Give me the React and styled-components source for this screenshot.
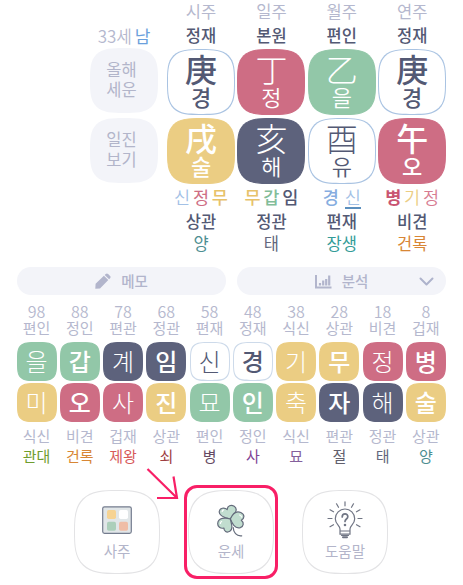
import styled, { createGlobalStyle } from "styled-components";

const GlobalStyle = createGlobalStyle`
  * { box-sizing: border-box; }
  body {
    margin: 0;
    background: #fff;
    overflow: hidden;
    font-family: "Noto Sans CJK KR", "Noto Sans", sans-serif;
  }
`;

const palette = {
  red: "#ce6d84",
  green: "#92c7a8",
  yellow: "#ebcd83",
  navy: "#5d627c",
  white: "#fff",
};

const muted = "#b5b8ce";
const ink = "#535974";

const Page = styled.main`
  position: relative;
  width: 463px;
  height: 585px;
  overflow: hidden;
`;

const Chart = styled.section`
  display: flex;
  gap: 9px;
  height: 267px;
  padding-left: 90px;
`;

const Side = styled.div`
  display: flex;
  flex-direction: column;
  gap: 5px;
  width: 68px;
  padding-top: 23px;
`;

const Age = styled.div`
  height: 20px;
  line-height: 25px;
  font-size: 17px;
  font-weight: 350;
  text-align: center;
  white-space: nowrap;
  color: ${muted};
  span {
    margin-left: -1px;
    color: #6ba0dc;
    font-weight: 400;
  }
`;

const SideButton = styled.button`
  height: 65px;
  padding: 0 5px 4px 0;
  border: 0;
  border-radius: 27px;
  background: #f3f4f9;
  color: #b2b5ca;
  font: 400 16.5px/20px "Noto Sans CJK KR", sans-serif;
  @supports (corner-shape: squircle) {
    border-radius: 50%;
    corner-shape: superellipse(1.7);
  }
`;

const Pillars = styled.div`
  display: grid;
  grid-template-columns: repeat(4, 68px);
  column-gap: 2.4px;
`;

const Pillar = styled.div`
  display: flex;
  flex-direction: column;
  align-items: center;
`;

const Label = styled.div`
  height: ${(p) => p.$h || 24}px;
  margin-bottom: ${(p) => p.$gap || 0}px;
  line-height: ${(p) => p.$h || 24}px;
  font-size: ${(p) => p.$size || 16.5}px;
  font-weight: ${(p) => p.$weight || 400};
  white-space: nowrap;
  color: ${(p) => p.$color || muted};
`;

const Tile = styled.div`
  display: flex;
  flex-direction: column;
  align-items: center;
  width: 68px;
  height: 66px;
  margin-bottom: 3.5px;
  border-radius: 27px;
  border: 1px solid ${(p) => (p.$tone === "white" ? "#a9c3e2" : palette[p.$tone])};
  background: ${(p) => palette[p.$tone]};
  color: ${(p) => (p.$tone === "white" ? ink : "#fff")};
  font-weight: ${(p) => (p.$bold ? 500 : 300)};
  @supports (corner-shape: squircle) {
    border-radius: 50%;
    corner-shape: superellipse(1.7);
  }
`;

const Hanja = styled.span`
  height: 35px;
  font-size: 32px;
  line-height: 37px;
`;

const Reading = styled.span`
  font-size: 22px;
  line-height: 23px;
  font-weight: ${(p) => (p.$bold ? 500 : 350)};
`;

const Stems = styled.div`
  display: flex;
  justify-content: center;
  gap: ${(p) => (p.$wide ? 6 : 2.8)}px;
  height: 24px;
  margin-top: -3px;
  font-size: 17.5px;
  line-height: 24px;
`;

const Stem = styled.span`
  height: ${(p) => (p.$marked ? 24 : 22)}px;
  color: ${(p) => p.$color};
  font-weight: ${(p) => p.$weight};
  border-bottom: ${(p) => (p.$marked ? "2px solid #5b8fbe" : "0")};
`;

const Bars = styled.section`
  display: grid;
  grid-template-columns: 209px 209px;
  gap: 11px;
  padding-left: 17px;
`;

const Bar = styled.button`
  display: flex;
  align-items: center;
  justify-content: center;
  gap: 10px;
  height: 28px;
  padding: 0;
  border: 0;
  border-radius: 14px;
  background: #f3f4f9;
  color: #b2b5cc;
  font: 500 14.5px/28px "Noto Sans CJK KR", sans-serif;
  svg { display: block; }
`;

const BarEnd = styled.span`
  width: 14px;
  margin-left: 41px;
  margin-right: -65px;
`;

const Decades = styled.section`
  display: grid;
  grid-template-columns: repeat(10, 43.25px);
  padding: 8px 0 0 15px;
`;

const Decade = styled.div`
  display: flex;
  flex-direction: column;
  align-items: center;
`;

const SmallTile = styled.div`
  width: 40px;
  height: 39px;
  margin-bottom: 2px;
  border-radius: 13px;
  border: 1px solid ${(p) => (p.$tone === "white" ? "#cddaea" : palette[p.$tone])};
  background: ${(p) => palette[p.$tone]};
  color: ${(p) => (p.$tone === "white" ? ink : "#fff")};
  font-size: 24px;
  line-height: 36px;
  font-weight: ${(p) => (p.$bold ? 500 : 300)};
  text-align: center;
  @supports (corner-shape: squircle) {
    border-radius: 50%;
    corner-shape: superellipse(1.9);
  }
`;

const Menu = styled.nav`
  display: grid;
  grid-template-columns: repeat(3, 86px);
  gap: 28px;
  padding: 27px 0 0 74px;
`;

const MenuButton = styled.button`
  display: flex;
  flex-direction: column;
  align-items: center;
  height: 84px;
  padding: 11px 0 0;
  border: 1px solid #e3e3e5;
  border-radius: 36px;
  background: #fff;
  color: #b3b5ca;
  font: 400 14.5px/20px "Noto Sans CJK KR", sans-serif;
  svg {
    display: block;
    height: 38px;
    margin-top: -1px;
    margin-bottom: 2px;
  }
  @supports (corner-shape: squircle) {
    border-radius: 50%;
    corner-shape: superellipse(1.6);
  }
`;

const Highlight = styled.div`
  position: absolute;
  left: 184px;
  top: 485px;
  width: 94px;
  height: 94px;
  border: 3px solid #f81f66;
  border-radius: 13px;
`;

const Pointer = styled.svg`
  position: absolute;
  left: 140px;
  top: 460px;
`;

const pillars = [
  {
    name: "시주", god: "정재",
    top: ["庚", "경", "white", true], bottom: ["戌", "술", "yellow", true],
    stems: [["신", "#a3c1e6", 350], ["정", "#ce6d84", 400], ["무", "#e7c26a", 500]],
    lower: "상관", stage: "양", stageColor: "#4d8e91",
  },
  {
    name: "일주", god: "본원",
    top: ["丁", "정", "red", false], bottom: ["亥", "해", "navy", false],
    stems: [["무", "#e7c26a", 500], ["갑", "#82bd99", 500], ["임", "#535974", 500]],
    lower: "정관", stage: "태", stageColor: "#63677d",
  },
  {
    name: "월주", god: "편인",
    top: ["乙", "을", "green", false], bottom: ["酉", "유", "white", false],
    stems: [["경", "#86ade0", 500], ["신", "#a3c1e6", 350, true]],
    lower: "편재", stage: "장생", stageColor: "#339c98",
  },
  {
    name: "연주", god: "정재",
    top: ["庚", "경", "white", true], bottom: ["午", "오", "red", true],
    stems: [["병", "#c95572", 700], ["기", "#ebcd83", 350], ["정", "#d77b91", 350]],
    lower: "비견", stage: "건록", stageColor: "#d88635",
  },
];

const decades = [
  [98, "편인", "을", "green", 0, "미", "yellow", 0, "식신", "관대", "#6f9d2e"],
  [88, "정인", "갑", "green", 1, "오", "red", 1, "비견", "건록", "#d88635"],
  [78, "편관", "계", "navy", 0, "사", "red", 0, "겁재", "제왕", "#d75a5a"],
  [68, "정관", "임", "navy", 1, "진", "yellow", 1, "상관", "쇠", "#9e3e42"],
  [58, "편재", "신", "white", 0, "묘", "green", 0, "편인", "병", "#654a63"],
  [48, "정재", "경", "white", 1, "인", "green", 1, "정인", "사", "#804395"],
  [38, "식신", "기", "yellow", 0, "축", "yellow", 0, "식신", "묘", "#84609c"],
  [28, "상관", "무", "yellow", 1, "자", "navy", 1, "편관", "절", "#62606d"],
  [18, "비견", "정", "red", 0, "해", "navy", 0, "정관", "태", "#63677d"],
  [8, "겁재", "병", "red", 1, "술", "yellow", 1, "상관", "양", "#4d8e91"],
];

const PencilIcon = () => (
  <svg width="16" height="16" viewBox="0 0 16 16" fill="#b2b5cc">
    <path d="M.3 15.700.6 10.800 8.900 2.700l4.400 4.400-8.300 8.300zM9.700 1.900l1-1q1.200-1 2.400 0l2 2q1 1.200 0 2.400l-1 1z" />
  </svg>
);

const ChartIcon = () => (
  <svg width="17" height="15" viewBox="0 0 17 15" fill="none" stroke="#b2b5cc">
    <path d="M1 1v12.500h15.500" strokeWidth="2" />
    <path d="M5 9v2.500M8.200 6.500v5M11.200 5v6.500M14.200 1.500v10" strokeWidth="2.200" />
  </svg>
);

const ChevronIcon = () => (
  <svg width="15" height="10" viewBox="0 0 15 10" fill="none" stroke="#aeb3cc" strokeWidth="2">
    <path d="m1.500 2.500 6 6 6-6" strokeLinecap="round" strokeLinejoin="round" />
  </svg>
);

const BoardIcon = () => (
  <svg width="30" height="38" viewBox="0 0 30 38">
    <rect x=".7" y="5.800" width="28.600" height="26.500" rx="1.800" fill="#e1e6e8" stroke="#747c8e" strokeWidth="1.200" />
    <rect x="5" y="9" width="9" height="9" rx="1.700" fill="#f6d393" />
    <rect x="17" y="9" width="9" height="9" rx="1.700" fill="#fff" />
    <rect x="5" y="20.800" width="9" height="9" rx="1.700" fill="#accfba" />
    <rect x="17" y="20.800" width="9" height="9" rx="1.700" fill="#efbda7" />
  </svg>
);

const CloverIcon = () => (
  <svg width="30" height="38" viewBox="0 -2 30 38" stroke="#646b7b" strokeWidth="1.200" strokeLinecap="round" strokeLinejoin="round">
    <path d="M14.300 16C9.500 15 3 13 3.200 8.800 3.600 4.800 8.300 4 11.200 6.500 11.400 2.500 15 1.500 18.200 3.200 23 6.500 18 12 14.300 16Z" fill="#c1ddcf" />
    <path d="M14.300 16C16.500 11 20 7.500 24.800 9.500 29.200 11.500 28.500 15.700 25.300 17.200 28.300 19.500 27.700 23.400 24.300 24.600 18.500 26 16 20 14.300 16Z" fill="#c1ddcf" />
    <path d="M14.300 16C15.500 21 17.500 25.500 13.800 28.300 10.500 30.200 7.800 28 7.900 25 4.500 26 1.500 23.500 1.700 20.500 2.200 14.500 9.500 14.500 14.300 16Z" fill="#c1ddcf" />
    <path d="M17.200 24.500C17.400 29 20.300 33.500 25.700 32.800" fill="none" />
    <path d="M6.200 8.500q.2-1.300 1.300-1.600M23.500 12q2 .5 2 2M4.400 20.500q.1-1.500 1.200-2" fill="none" stroke="#fff" />
  </svg>
);

const BulbIcon = () => (
  <svg width="36" height="38" viewBox="0 0 36 38" fill="none" stroke="#707584" strokeWidth="1.200" strokeLinecap="round">
    <path d="M13 30v-2c0-3.500-4.700-4.600-4.700-10.300a9.700 9.700 0 0 1 19.400 0c0 5.700-4.700 6.800-4.700 10.300v2zM13 30.200v3h10v-3M14.500 34.500h7" />
    <path d="M16 36.200h4" strokeWidth="2" />
    <path d="M18 .8v4M9.500 2.800l2 3.500M26.500 2.800l-2 3.500M3 8.800l3.500 2M33 8.800l-3.500 2M1 17.500h4M35 17.500h-4M3 25.700l3.500-2M33 25.700l-3.500-2" />
    <path d="M15.200 16c0-4.300 5.800-4 5.600-.3 0 2.300-2.800 2.300-2.800 4.800" strokeWidth="1.700" />
    <circle cx="18" cy="24" r=".7" fill="#707584" />
  </svg>
);

const BigTile = ({ data: [hanja, reading, tone, bold] }) => (
  <Tile $tone={tone} $bold={bold}>
    <Hanja>{hanja}</Hanja>
    <Reading $bold={bold}>{reading}</Reading>
  </Tile>
);

const App = () => {
  return (
    <Page>
      <GlobalStyle />
      <Chart>
        <Side>
          <Age>33세 <span>남</span></Age>
          <SideButton>올해<br />세운</SideButton>
          <SideButton>일진<br />보기</SideButton>
        </Side>
        <Pillars>
          {pillars.map((p, i) => (
            <Pillar key={i}>
              <Label $h={23}>{p.name}</Label>
              <Label $h={25.5} $weight={500} $color={ink}>{p.god}</Label>
              <BigTile data={p.top} />
              <BigTile data={p.bottom} />
              <Stems $wide={p.stems.length === 2}>
                {p.stems.map(([text, color, weight, marked]) => (
                  <Stem key={text} $color={color} $weight={weight} $marked={marked}>{text}</Stem>
                ))}
              </Stems>
              <Label $h={24} $weight={500} $color={ink}>{p.lower}</Label>
              <Label $h={21} $color={p.stageColor}>{p.stage}</Label>
            </Pillar>
          ))}
        </Pillars>
      </Chart>
      <Bars>
        <Bar><PencilIcon />메모</Bar>
        <Bar>
          <ChartIcon />분석
          <BarEnd><ChevronIcon /></BarEnd>
        </Bar>
      </Bars>
      <Decades>
        {decades.map(([age, god, stem, stemTone, stemBold, branch, branchTone, branchBold, lower, stage, color]) => (
          <Decade key={age}>
            <Label $h={16} $size={16} $weight={350}>{age}</Label>
            <Label $h={18} $size={15} $gap={4.5}>{god}</Label>
            <SmallTile $tone={stemTone} $bold={stemBold}>{stem}</SmallTile>
            <SmallTile $tone={branchTone} $bold={branchBold}>{branch}</SmallTile>
            <Label $h={24} $size={15}>{lower}</Label>
            <Label $h={15.5} $size={15} $color={color}>{stage}</Label>
          </Decade>
        ))}
      </Decades>
      <Menu>
        <MenuButton><BoardIcon />사주</MenuButton>
        <MenuButton><CloverIcon />운세</MenuButton>
        <MenuButton><BulbIcon />도움말</MenuButton>
      </Menu>
      <Highlight />
      <Pointer width="40" height="42" viewBox="0 0 40 42" fill="none" stroke="#f81f66" strokeWidth="2.200">
        <path d="M7.500 9 37 38M33.500 16.500 37 38H17" />
      </Pointer>
    </Page>
  );
};

export default App;
